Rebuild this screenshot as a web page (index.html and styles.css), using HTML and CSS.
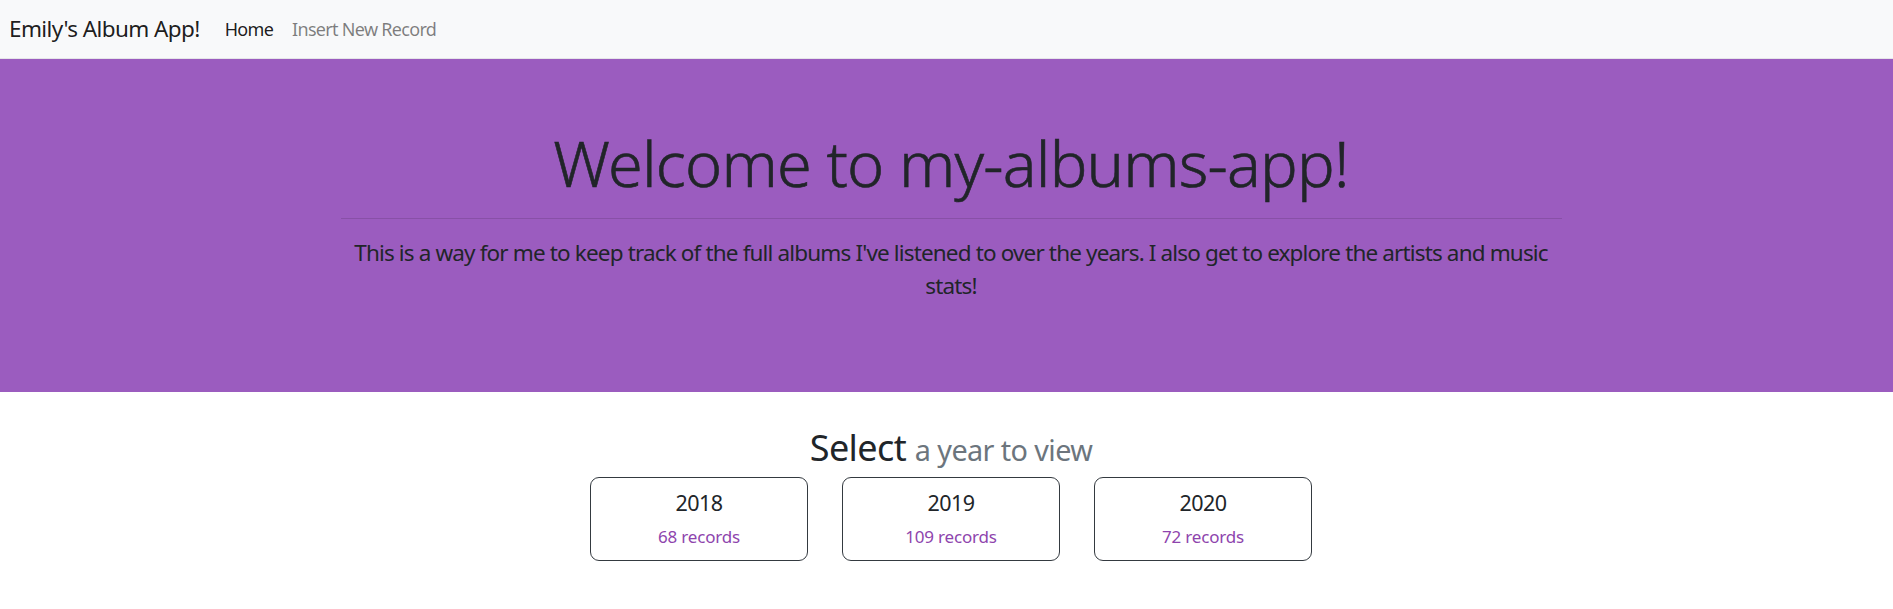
FILE: index.html
```html
<!DOCTYPE html>
<html lang="en">
<head>
<meta charset="utf-8">
<title>Emily's Album App!</title>
<link rel="stylesheet" href="styles.css">
</head>
<body>
<nav class="navbar">
  <a class="brand" href="#">Emily's Album App!</a>
  <ul class="nav">
    <li><a class="nav-link active" href="#">Home</a></li>
    <li><a class="nav-link" href="#">Insert New Record</a></li>
  </ul>
</nav>
<header class="jumbotron">
  <div class="jumbo-inner">
    <h1 class="display">Welcome to my-albums-app!</h1>
    <hr class="divider">
    <p class="lead">This is a way for me to keep track of the full albums I've listened to over the years. I also get to explore the artists and music stats!</p>
  </div>
</header>
<main class="content">
  <h2 class="select-title">Select <small class="muted">a year to view</small></h2>
  <div class="cards">
    <a class="card" href="#"><span class="card-year">2018</span><span class="card-count">68 records</span></a>
    <a class="card" href="#"><span class="card-year">2019</span><span class="card-count">109 records</span></a>
    <a class="card" href="#"><span class="card-year">2020</span><span class="card-count">72 records</span></a>
  </div>
</main>
</body>
</html>
```
FILE: styles.css
```css
* { box-sizing: border-box; }
html, body {
  margin: 0;
  padding: 0;
  background: #fff;
  color: #212529;
  font-family: "Noto Sans", "Open Sans", sans-serif;
  font-size: 18px;
  line-height: 1.5;
}
a { text-decoration: none; }

.navbar {
  height: 59px;
  background: #f8f9fa;
  display: flex;
  align-items: center;
  padding: 0 9px;
  border-bottom: 1px solid #e5e5e8;
}
.brand {
  font-size: 22.5px;
  color: rgba(0,0,0,.9);
  margin-right: 25px;
  letter-spacing: -0.6px;
}
.nav {
  list-style: none;
  margin: 0;
  padding: 0;
  display: flex;
  gap: 19px;
}
.nav-link {
  font-size: 18px;
  letter-spacing: -0.7px;
  color: rgba(0,0,0,.5);
}
.nav-link.active { color: rgba(0,0,0,.9); }

.jumbotron {
  background: #9b5cbf;
  height: 333px;
  padding-top: 66px;
  padding-left: 9px;
}
.jumbo-inner {
  width: 1221px;
  margin: 0 auto;
  text-align: center;
}
.display {
  margin: 0;
  font-size: 63px;
  font-weight: 300;
  line-height: 1.2;
  letter-spacing: -0.8px;
  -webkit-text-stroke: 0.6px #212529;
}
.divider {
  margin: 17px 0 0;
  border: 0;
  border-top: 1px solid rgba(0,0,0,.12);
}
.lead {
  margin: 17px 0 0;
  font-size: 22.5px;
  font-weight: 400;
  line-height: 1.5;
  letter-spacing: -0.85px;
  padding: 0;
}

.content {
  padding-left: 9px;
  text-align: center;
}
.select-title {
  margin: 34px 0 8px;
  font-size: 36px;
  font-weight: 400;
  line-height: 1.2;
  letter-spacing: -0.6px;
}
.muted {
  font-size: 80%;
  color: #6c757d;
}
.cards {
  display: flex;
  justify-content: center;
  gap: 34px;
}
.card {
  width: 218px;
  height: 84px;
  border: 1px solid #343a40;
  border-radius: 9px;
  display: flex;
  flex-direction: column;
  align-items: center;
  padding-top: 9px;
}
.card-year {
  font-size: 21.5px;
  line-height: 1.5;
  letter-spacing: -0.6px;
  color: #212529;
}
.card-count {
  font-size: 17px;
  line-height: 1.5;
  margin-top: 5px;
  letter-spacing: -0.2px;
  color: #8e44ad;
}
```
